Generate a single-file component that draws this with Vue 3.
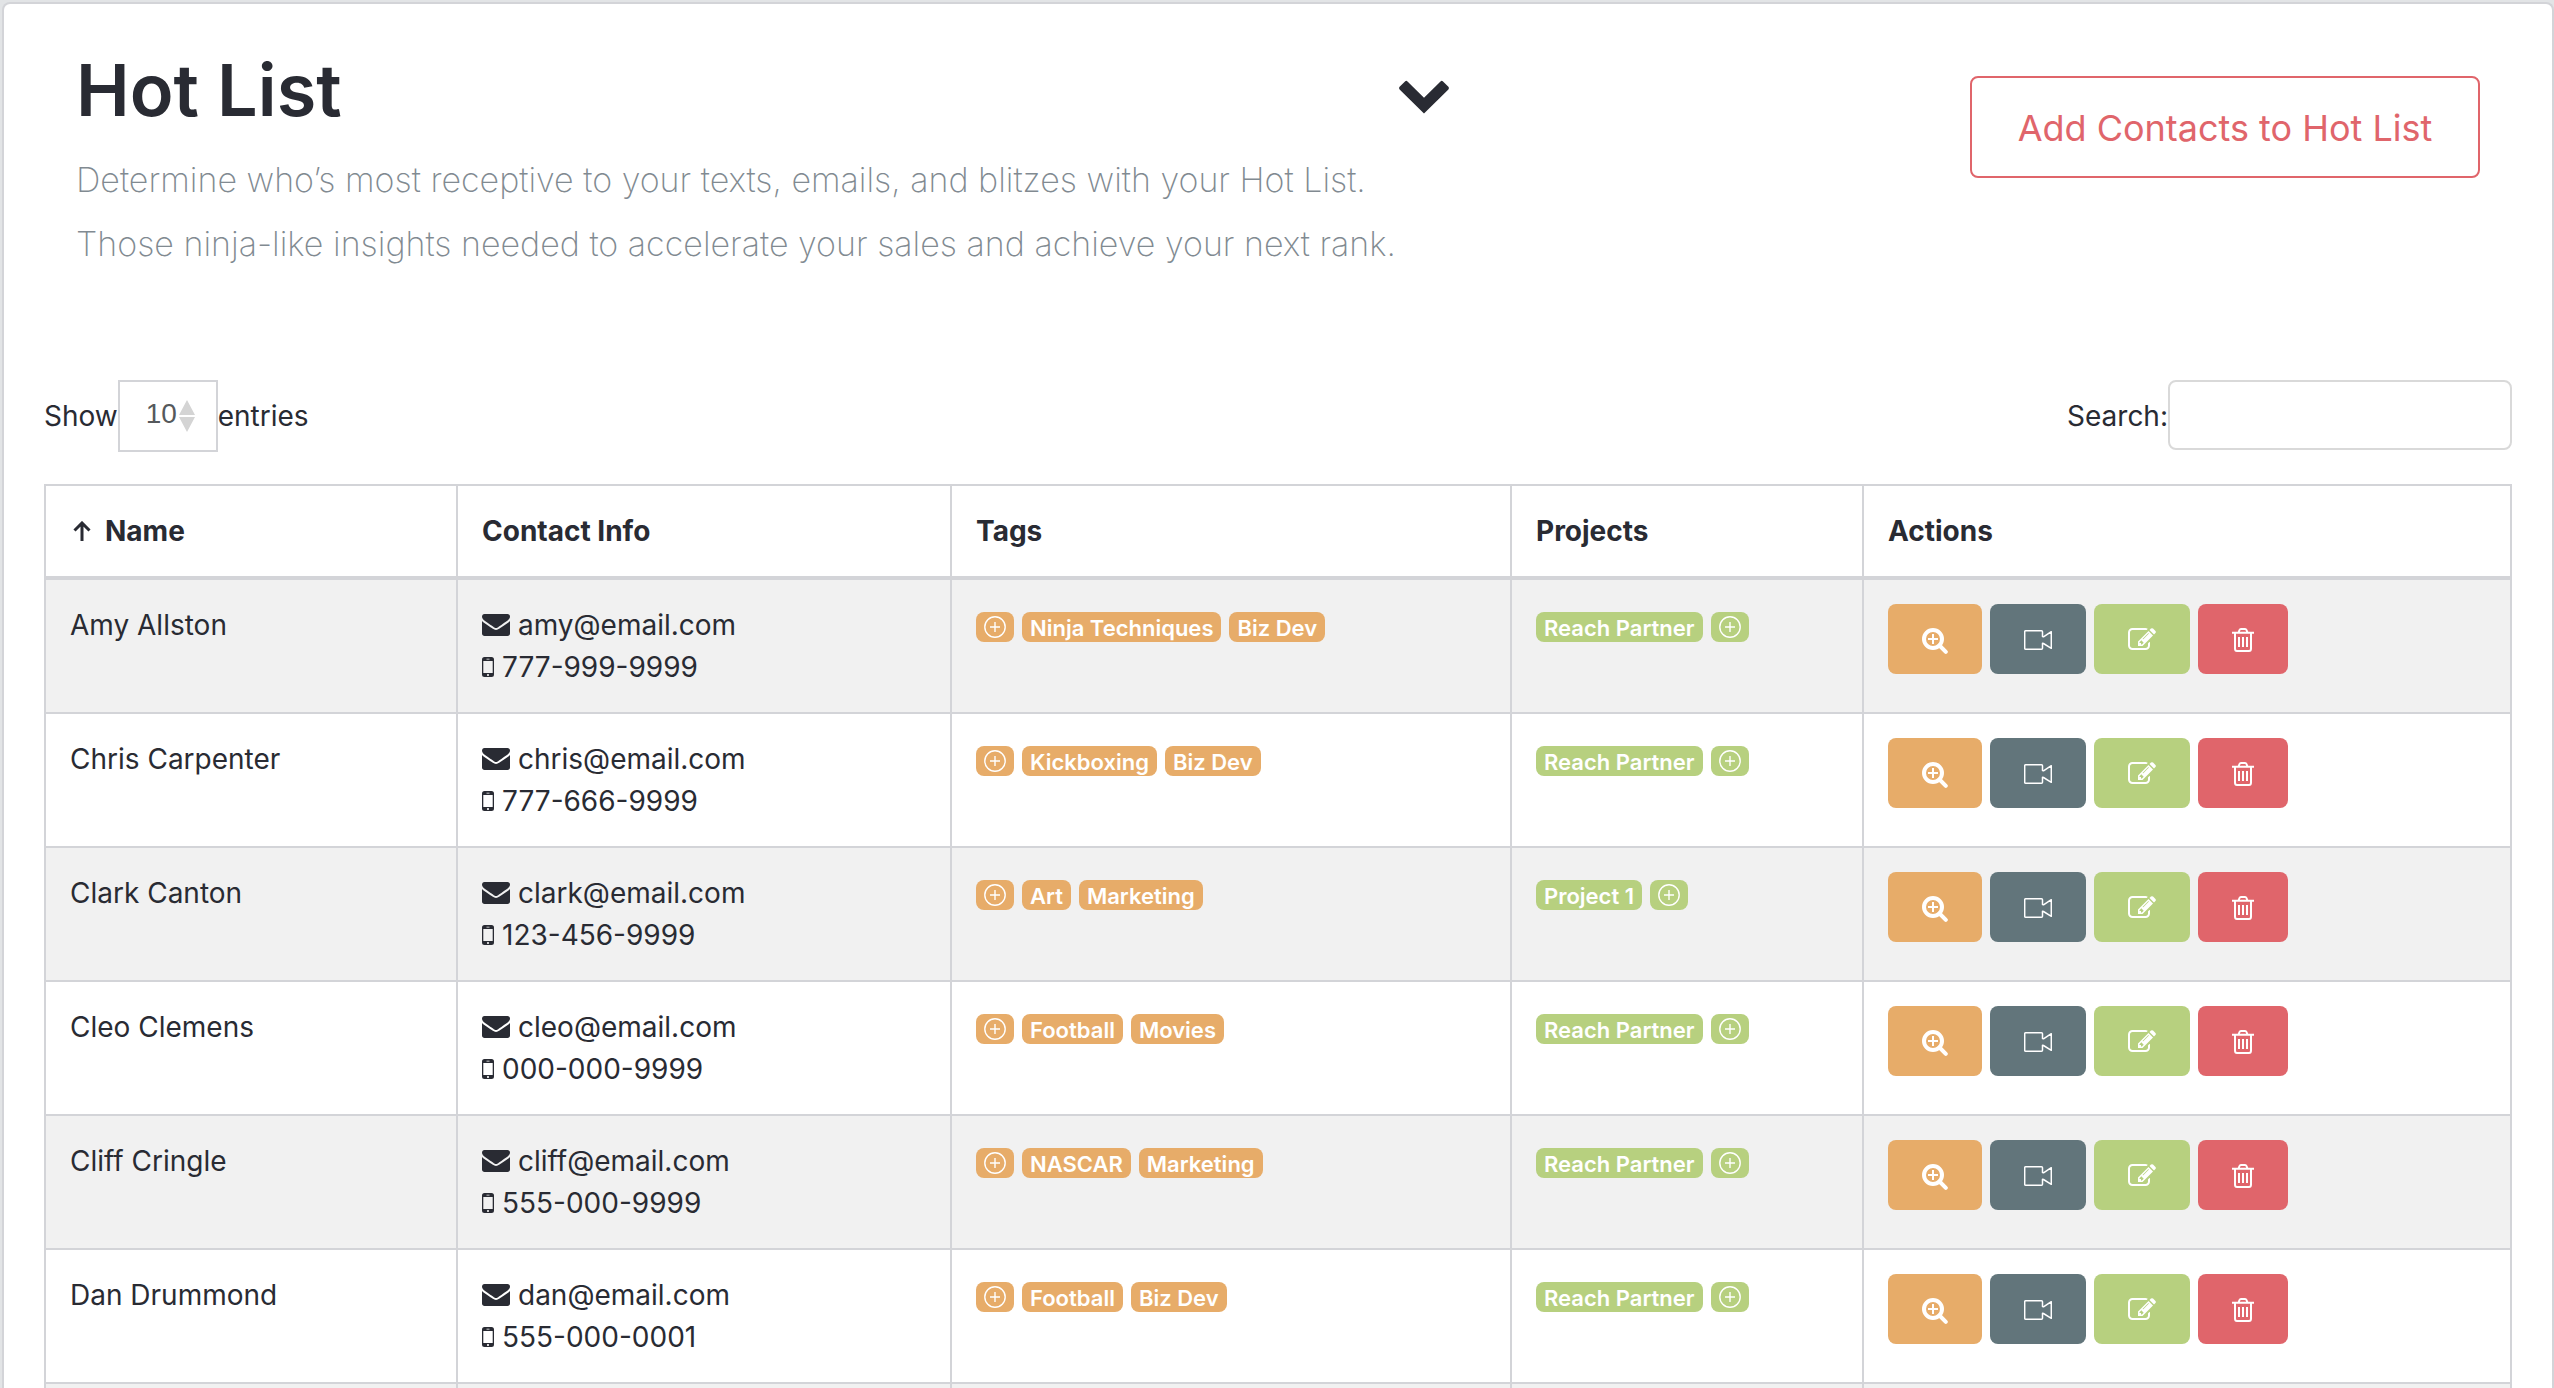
<script setup>
import { ref } from 'vue'

const pageSize = ref('10')
const search = ref('')

const columns = ['Contact Info', 'Tags', 'Projects', 'Actions']

const contacts = [
  { name: 'Amy Allston', email: 'amy@email.com', phone: '777-999-9999', tags: ['Ninja Techniques', 'Biz Dev'], project: 'Reach Partner' },
  { name: 'Chris Carpenter', email: 'chris@email.com', phone: '777-666-9999', tags: ['Kickboxing', 'Biz Dev'], project: 'Reach Partner' },
  { name: 'Clark Canton', email: 'clark@email.com', phone: '123-456-9999', tags: ['Art', 'Marketing'], project: 'Project 1' },
  { name: 'Cleo Clemens', email: 'cleo@email.com', phone: '000-000-9999', tags: ['Football', 'Movies'], project: 'Reach Partner' },
  { name: 'Cliff Cringle', email: 'cliff@email.com', phone: '555-000-9999', tags: ['NASCAR', 'Marketing'], project: 'Reach Partner' },
  { name: 'Dan Drummond', email: 'dan@email.com', phone: '555-000-0001', tags: ['Football', 'Biz Dev'], project: 'Reach Partner' },
]
</script>

<template>
  <main class="card">
    <header class="intro">
      <div class="intro-text">
        <div class="title-row">
          <h1>Hot List</h1>
          <button class="collapse" type="button" aria-label="Collapse">
            <svg width="52" height="34" viewBox="0 0 52 34"><path d="M26 33.500L1.600 9.400q-1.200-1.300 0-2.600L7 1.400q1.200-1.200 2.500 0L26 17.800 42.500 1.400q1.300-1.200 2.500 0l5.400 5.400q1.200 1.300 0 2.600z" fill="currentColor" /></svg>
          </button>
        </div>
        <p>Determine who’s most receptive to your texts, emails, and blitzes with your Hot List.<br>Those ninja-like insights needed to accelerate your sales and achieve your next rank.</p>
      </div>
      <button class="add" type="button">Add Contacts to Hot List</button>
    </header>

    <div class="toolbar">
      <div class="length">
        <label for="page-size">Show</label>
        <span class="select">
          <select id="page-size" v-model="pageSize">
            <option>10</option>
            <option>25</option>
            <option>50</option>
          </select>
          <svg class="carets" width="16" height="32" viewBox="0 0 16 32"><path d="M8 0l8 15H0zM8 32l8-15H0z" fill="#d4d4d4" /></svg>
        </span>
        <span>entries</span>
      </div>
      <div class="filter">
        <label for="search">Search:</label>
        <input id="search" v-model="search" type="search">
      </div>
    </div>

    <table>
      <colgroup>
        <col class="c-name"><col class="c-info"><col class="c-tags"><col class="c-projects"><col>
      </colgroup>
      <thead>
        <tr>
          <th scope="col">
            <span class="sorted">
              <svg width="18" height="20" viewBox="0 0 18 20"><path d="M9 20V2M1.500 9.500L9 2l7.500 7.500" fill="none" stroke="currentColor" stroke-width="3" /></svg>
              Name
            </span>
          </th>
          <th v-for="c in columns" :key="c" scope="col">{{ c }}</th>
        </tr>
      </thead>
      <tbody>
        <tr v-for="p in contacts" :key="p.email">
          <td>{{ p.name }}</td>
          <td>
            <div class="line">
              <svg width="28" height="22" viewBox="0 256 1792 1408"><path fill="currentColor" d="M1792 710v794q0 66-47 113t-113 47h-1472q-66 0-113-47t-47-113v-794q44 49 101 87 362 246 497 345 57 42 92.500 65.500t94.500 48 110 24.500h2q51 0 110-24.500t94.500-48 92.500-65.500q170-123 498-345 57-39 100-87zm0-294q0 79-49 151t-122 123q-376 261-468 325-10 7-42.500 31t-54 38.500-52 32.500-57.500 27-50 9h-2q-23 0-50-9t-57.500-27-52-32.500-54-38.500-42.500-31q-91-64-262-182.500t-205-142.500q-62-42-117-115.500t-55-136.500q0-78 41.500-130t118.500-52h1472q65 0 112.500 47t47.500 113z" /></svg>
              {{ p.email }}
            </div>
            <div class="line">
              <svg width="12" height="20" viewBox="0 0 12 20"><path fill="currentColor" fill-rule="evenodd" d="M2.500 0h7A2.500 2.500 0 0 1 12 2.500v15A2.500 2.500 0 0 1 9.500 20h-7A2.500 2.500 0 0 1 0 17.500v-15A2.500 2.500 0 0 1 2.500 0zM1.300 4v12h9.400V4zM4.500 1.800v.7h3v-.7zM6 16.900a1.100 1.100 0 1 0 0 2.200 1.100 1.100 0 0 0 0-2.200z" /></svg>
              {{ p.phone }}
            </div>
          </td>
          <td>
            <div class="badges">
              <button class="badge orange plus" type="button" aria-label="Add tag">
                <svg width="22" height="22" viewBox="0 0 22 22"><path d="M6 11h10M11 6v10" /><circle cx="11" cy="11" r="10.200" /></svg>
              </button>
              <span v-for="t in p.tags" :key="t" class="badge orange">{{ t }}</span>
            </div>
          </td>
          <td>
            <div class="badges">
              <span class="badge green">{{ p.project }}</span>
              <button class="badge green plus" type="button" aria-label="Add project">
                <svg width="22" height="22" viewBox="0 0 22 22"><path d="M6 11h10M11 6v10" /><circle cx="11" cy="11" r="10.200" /></svg>
              </button>
            </div>
          </td>
          <td>
            <div class="actions">
              <button class="act orange" type="button" aria-label="View">
                <svg width="26" height="26" viewBox="0 0 26 26" fill="none" stroke="#fff"><circle cx="11" cy="11" r="9" stroke-width="4" /><path d="M17.500 17.500l6.300 6.300" stroke-width="4" stroke-linecap="round" /><path d="M6 11h10M11 6v10" stroke-width="2" /></svg>
              </button>
              <button class="act slate" type="button" aria-label="Video">
                <svg width="28" height="26" viewBox="0 0 28 26" fill="none" stroke="#fff" stroke-width="1.500" stroke-linejoin="round"><path d="M1.700 2.700H17.500q1 0 1 1V8.500l1 .3L27.300 3.700V20.300L19.500 15.500l-1-.3V20.300q0 1-1 1H1.700q-1 0-1-1V3.700q0-1 1-1z" /></svg>
              </button>
              <button class="act green" type="button" aria-label="Edit">
                <svg width="28" height="26" viewBox="0 128 1792 1664"><path fill="#fff" d="M888 1184l116-116-152-152-116 116v56h96v96h56zm440-720q-16-16-33 1l-350 350q-17 17-1 33t33-1l350-350q17-17 1-33zm80 594v190q0 119-84.500 203.500t-203.500 84.500h-832q-119 0-203.500-84.500t-84.500-203.500v-832q0-119 84.500-203.500t203.500-84.500h832q63 0 117 25 15 7 18 23 3 17-9 29l-49 49q-14 14-32 8-23-6-45-6h-832q-66 0-113 47t-47 113v832q0 66 47 113t113 47h832q66 0 113-47t47-113v-126q0-13 9-22l64-64q15-15 35-7t20 29zm-96-738l288 288-672 672h-288v-288zm444 132l-92 92-288-288 92-92q28-28 68-28t68 28l152 152q28 28 28 68t-28 68z" /></svg>
              </button>
              <button class="act red" type="button" aria-label="Delete">
                <svg width="22" height="26" viewBox="0 0 22 26" fill="none" stroke="#fff" stroke-width="2"><path d="M0 4.800h22M6.500 4.500l1-2.500q.4-1 1.500-1h4q1.100 0 1.500 1l1 2.500M3 5v15.500q0 2.500 2 2.500h12q2 0 2-2.500V5M7 9v10M11 9v10M15 9v10" /></svg>
              </button>
            </div>
          </td>
        </tr>
        <tr>
          <td /><td /><td /><td /><td />
        </tr>
      </tbody>
    </table>
  </main>
</template>

<style>
body {
  background: #e2e4e6;
}
</style>

<style scoped>
* {
  box-sizing: border-box;
}

.card {
  height: calc(100vh - 2px);
  overflow: hidden;
  margin: 2px 0 0 2px;
  padding: 0 40px;
  border: solid #d3d4d8;
  border-width: 2px 2px 0;
  border-radius: 8px 8px 0 0;
  background: #fff;
  color: #292b33;
  font: 400 28px/42px Inter, "Liberation Sans", sans-serif;
}

button,
input,
select {
  font: inherit;
}

svg {
  display: block;
  flex: none;
}

.intro {
  display: flex;
  justify-content: space-between;
  align-items: flex-start;
  padding: 42px 32px 104px;
}

.intro-text {
  flex: 0 1 1374px;
}

.title-row {
  display: flex;
  align-items: center;
  justify-content: space-between;
}

h1 {
  margin: 0;
  font-size: 72px;
  font-weight: 600;
  line-height: 88px;
}

.collapse {
  margin: 14px 0 0;
  padding: 0;
  border: 0;
  background: none;
  color: inherit;
}

p {
  margin: 14px 0 0;
  color: #818a91;
  font-size: 34px;
  font-weight: 200;
  line-height: 64px;
  white-space: nowrap;
}

.add {
  flex: none;
  width: 510px;
  height: 102px;
  margin-top: 30px;
  padding: 2px 0 0;
  border: 2px solid #e0656b;
  border-radius: 8px;
  background: #fff;
  color: #e0656b;
  font-size: 36px;
  white-space: nowrap;
}

.toolbar {
  display: flex;
  justify-content: space-between;
  margin-bottom: 32px;
}

.length,
.filter {
  display: flex;
  align-items: center;
}

.select {
  position: relative;
}

select {
  display: block;
  width: 100px;
  height: 72px;
  padding: 0 26px 4px;
  border: 2px solid #d3d4d8;
  border-radius: 0;
  appearance: none;
  background: #fff;
  color: #55595c;
  font-family: "Liberation Sans", sans-serif;
}

.carets {
  position: absolute;
  top: 20px;
  right: 23px;
  pointer-events: none;
}

.filter {
  align-items: flex-start;
}

.filter label {
  line-height: 72px;
}

input {
  width: 344px;
  height: 70px;
  padding: 0 16px;
  border: 2px solid #d9d9d9;
  border-radius: 8px;
  appearance: none;
  background: #fff;
}

table {
  width: 100%;
  border: solid #d3d4d8;
  border-width: 2px 0 0 2px;
  border-spacing: 0;
  table-layout: fixed;
}

.c-name {
  width: 412px;
}

.c-info {
  width: 494px;
}

.c-tags {
  width: 560px;
}

.c-projects {
  width: 352px;
}

th,
td {
  padding: 24px;
  border: solid #d3d4d8;
  border-width: 0 2px 2px 0;
  text-align: left;
  vertical-align: top;
}

th {
  border-bottom-width: 4px;
  font-weight: 700;
}

tbody tr:nth-child(odd) {
  background: #f1f1f1;
}

.sorted {
  display: flex;
  align-items: center;
  gap: 14px;
  padding-left: 3px;
}

.line {
  display: flex;
  align-items: center;
  gap: 8px;
}

.badges,
.actions {
  display: flex;
  gap: 8px;
}

.badges {
  padding-top: 8px;
}

.badge {
  height: 30px;
  padding: 0 8px;
  border: 0;
  border-radius: 8px;
  color: #fff;
  font-size: 22px;
  font-weight: 600;
  line-height: 32px;
  white-space: nowrap;
}

.plus svg {
  fill: none;
  stroke: #fff;
  stroke-width: 1.400px;
}

.act {
  height: 70px;
  padding: 4px 34px 0;
  border: 0;
  border-radius: 8px;
}

.orange {
  background: #e7ac69;
}

.slate {
  background: #62757b;
}

.green {
  background: #b7d07f;
}

.red {
  background: #e0656b;
}
</style>
